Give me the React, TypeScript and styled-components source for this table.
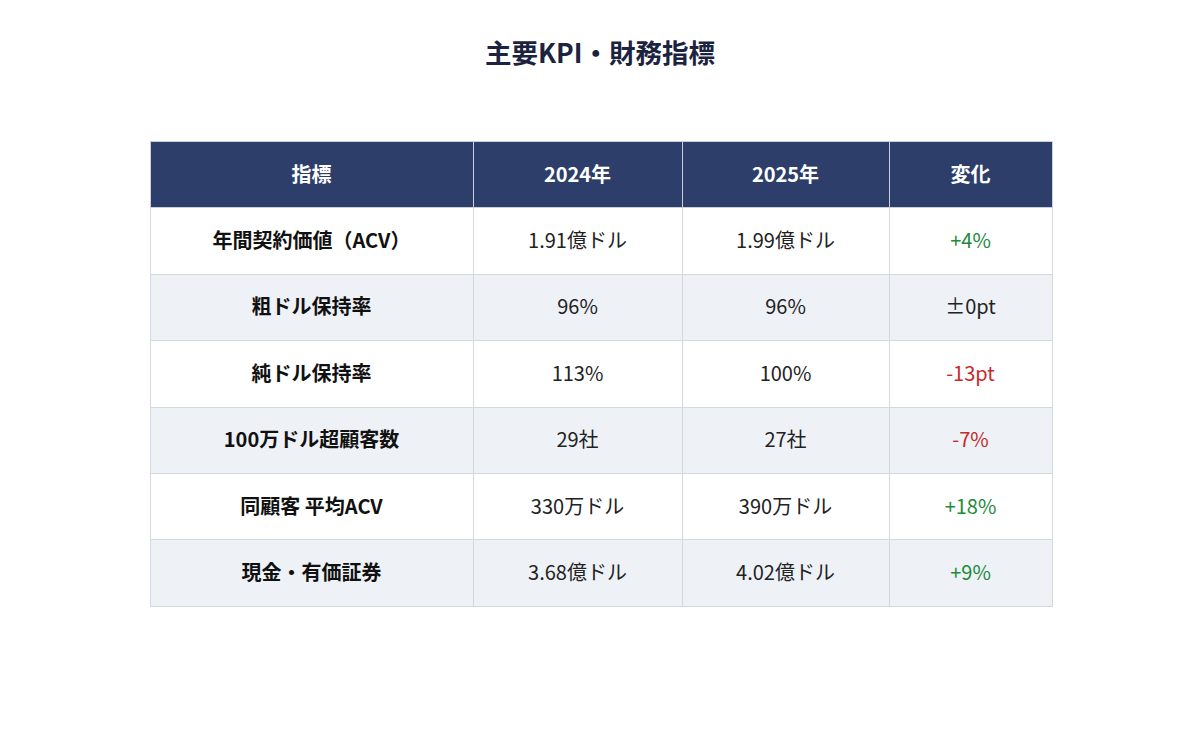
import React from 'react';
import styled, { createGlobalStyle } from 'styled-components';

const GlobalStyle = createGlobalStyle`
    html, body {
        margin: 0;
        padding: 0;
        background: #ffffff;
    }
    body {
        font-family: "Noto Sans CJK JP", "Noto Sans", sans-serif;
    }
`

const Page = styled.div`
    width: 1200px;
    height: 747px;
    display: flex;
    flex-direction: column;
    align-items: center;
    padding-top: 33px;
    box-sizing: border-box;
`

const Title = styled.h1`
    margin: 0 0 70px;
    font-size: 26.5px;
    line-height: 38px;
    font-weight: 700;
    color: #1c2340;
`

const Table = styled.table`
    width: 902px;
    margin-left: 2px;
    border-collapse: collapse;
    table-layout: fixed;
    th, td {
        height: 66.4px;
        padding: 0 12px 3px;
        border: 1px solid #d3d7de;
        text-align: center;
        font-size: 20px;
        box-sizing: border-box;
    }
    th {
        background: #2d3e6a;
        color: #ffffff;
        font-weight: 700;
        border-color: #c9ced8;
    }
`

const Row = styled.tr<{ $alt: boolean }>`
    background: ${p => (p.$alt ? '#eef2f7' : '#ffffff')};
`

const Label = styled.td`
    font-weight: 700;
    color: #111111;
`

const Value = styled.td`
    color: #222222;
`

const Change = styled.td<{ $tone: 'up' | 'down' | 'flat' }>`
    color: ${p => (p.$tone === 'up' ? '#1e8a3c' : p.$tone === 'down' ? '#c62a2a' : '#222222')};
`

const rows: { label: string; y24: string; y25: string; change: string; tone: 'up' | 'down' | 'flat' }[] = [
    { label: '年間契約価値（ACV）', y24: '1.91億ドル', y25: '1.99億ドル', change: '+4%', tone: 'up' },
    { label: '粗ドル保持率', y24: '96%', y25: '96%', change: '±0pt', tone: 'flat' },
    { label: '純ドル保持率', y24: '113%', y25: '100%', change: '-13pt', tone: 'down' },
    { label: '100万ドル超顧客数', y24: '29社', y25: '27社', change: '-7%', tone: 'down' },
    { label: '同顧客 平均ACV', y24: '330万ドル', y25: '390万ドル', change: '+18%', tone: 'up' },
    { label: '現金・有価証券', y24: '3.68億ドル', y25: '4.02億ドル', change: '+9%', tone: 'up' },
]

const App = () => {
    return (
        <>
            <GlobalStyle />
            <Page>
                <Title>主要KPI・財務指標</Title>
                <Table>
                    <colgroup>
                        <col style={{ width: 323 }} />
                        <col style={{ width: 209 }} />
                        <col style={{ width: 207 }} />
                        <col style={{ width: 163 }} />
                    </colgroup>
                    <thead>
                        <tr>
                            <th>指標</th>
                            <th>2024年</th>
                            <th>2025年</th>
                            <th>変化</th>
                        </tr>
                    </thead>
                    <tbody>
                        {rows.map((r, i) => (
                            <Row key={r.label} $alt={i % 2 === 1}>
                                <Label>{r.label}</Label>
                                <Value>{r.y24}</Value>
                                <Value>{r.y25}</Value>
                                <Change $tone={r.tone}>{r.change}</Change>
                            </Row>
                        ))}
                    </tbody>
                </Table>
            </Page>
        </>
    )
}

export default App;
